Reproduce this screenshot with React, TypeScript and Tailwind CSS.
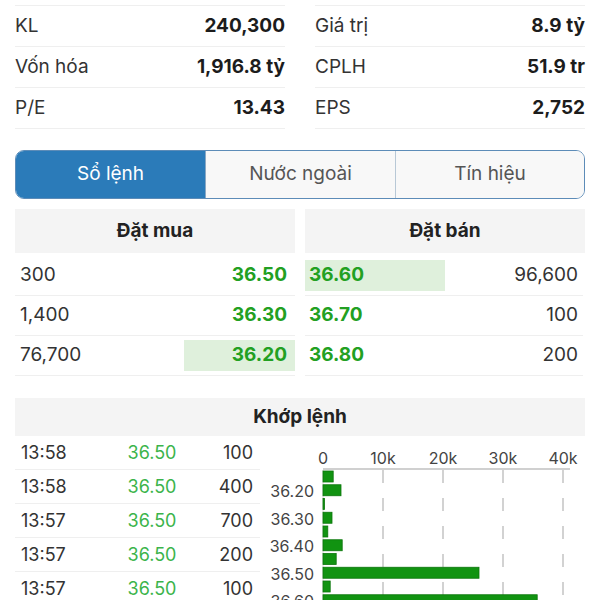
import React from "react";

const stats = [
  [
    ["KL", "240,300"],
    ["Vốn hóa", "1,916.8 tỷ"],
    ["P/E", "13.43"],
  ],
  [
    ["Giá trị", "8.9 tỷ"],
    ["CPLH", "51.9 tr"],
    ["EPS", "2,752"],
  ],
];

const buys = [
  { qty: "300", price: "36.50", bar: 0 },
  { qty: "1,400", price: "36.30", bar: 0 },
  { qty: "76,700", price: "36.20", bar: 111 },
];

const sells = [
  { qty: "96,600", price: "36.60", bar: 140 },
  { qty: "100", price: "36.70", bar: 0 },
  { qty: "200", price: "36.80", bar: 0 },
];

const trades = [
  ["13:58", "36.50", "100"],
  ["13:58", "36.50", "400"],
  ["13:57", "36.50", "700"],
  ["13:57", "36.50", "200"],
  ["13:57", "36.50", "100"],
];

// volume per 0.05 step, in thousands
const volumes = [1.7, 3, 0.25, 1.5, 0.8, 3.2, 2.2, 26, 1.2, 35.7];

function VolumeChart() {
  const x0 = 63;
  const perK = 6;
  const ticks = [0, 10, 20, 30, 40];
  const labels = ["36.20", "36.30", "36.40", "36.50", "36.60"];
  return (
    <svg width="325" height="165" viewBox="0 0 325 165" className="block">
      {ticks.map((t) => (
        <text
          key={t}
          x={x0 + t * perK}
          y="28"
          textAnchor="middle"
          fontSize="16"
          fill="#444"
          fontFamily="Inter, sans-serif"
        >
          {t === 0 ? "0" : `${t}k`}
        </text>
      ))}
      <line x1={x0} y1="33" x2="310" y2="33" stroke="#d0d0d0" strokeWidth="2" />
      {ticks.slice(1).map((t) => (
        <line
          key={t}
          x1={x0 + t * perK}
          y1="34"
          x2={x0 + t * perK}
          y2="165"
          stroke="#c4c4c4"
          strokeWidth="1.5"
          strokeDasharray="13 15"
        />
      ))}
      <line x1={x0} y1="34" x2={x0} y2="165" stroke="#d8d8d8" strokeWidth="1" />
      {volumes.map((v, i) => (
        <rect
          key={i}
          x={x0}
          y={35 + i * 13.75}
          width={Math.max(v * perK, 1.5)}
          height="11"
          fill="#119311"
          stroke="#0b760b"
          strokeWidth="0.8"
        />
      ))}
      {labels.map((l, i) => (
        <text
          key={l}
          x="54"
          y={61 + i * 27.5}
          textAnchor="end"
          fontSize="16"
          fill="#444"
          fontFamily="Inter, sans-serif"
        >
          {l}
        </text>
      ))}
    </svg>
  );
}

export default function App() {
  return (
    <div className="w-[600px] h-[600px] overflow-hidden bg-white font-['Inter','Liberation_Sans',sans-serif] text-[#222]">
      {/* stats */}
      <div className="grid grid-cols-2 gap-x-[30px] px-[15px] pt-[5px]">
        {stats.map((col, ci) => (
          <div key={ci} className="border-t border-[#efefef]">
            {col.map(([label, value]) => (
              <div
                key={label}
                className="h-[41px] flex items-center justify-between border-b border-[#efefef] text-[19px]"
              >
                <span className="text-[#333]">{label}</span>
                <span className="font-bold text-[#1c1c1c]">{value}</span>
              </div>
            ))}
          </div>
        ))}
      </div>

      {/* tabs */}
      <div className="mx-[15px] mt-[21px] h-[49px] flex rounded-[9px] border border-[#5d8cb8] overflow-hidden text-[19px]">
        <div className="w-[189px] flex items-center justify-center bg-[#2b7bb9] text-white">
          Sổ lệnh
        </div>
        <div className="w-[190px] flex items-center justify-center bg-[#f8f8f8] text-[#555] border-l border-[#8aa8c4]">
          Nước ngoài
        </div>
        <div className="flex-1 flex items-center justify-center bg-[#f8f8f8] text-[#555] border-l border-[#b8c8d6]">
          Tín hiệu
        </div>
      </div>

      {/* order book */}
      <div className="grid grid-cols-2 gap-x-[10px] px-[15px] mt-[10px]">
        <div>
          <div className="h-[44px] flex items-center justify-center bg-[#f4f4f4] font-bold text-[19px]">
            Đặt mua
          </div>
          <div className="mt-[3px]">
            {buys.map((r) => (
              <div
                key={r.price}
                className="h-[40px] flex items-center justify-between border-b border-[#efefef] text-[19px]"
              >
                <span className="pl-[5px] text-[#333]">{r.qty}</span>
                <span
                  className={
                    "h-[31px] flex items-center justify-end pr-[8px] font-bold text-[#22a022] " +
                    (r.bar ? "bg-[#dff0dc]" : "")
                  }
                  style={r.bar ? { width: r.bar } : undefined}
                >
                  {r.price}
                </span>
              </div>
            ))}
          </div>
        </div>
        <div>
          <div className="h-[44px] flex items-center justify-center bg-[#f4f4f4] font-bold text-[19px]">
            Đặt bán
          </div>
          <div className="mt-[3px]">
            {sells.map((r) => (
              <div
                key={r.price}
                className="h-[40px] flex items-center justify-between border-b border-[#efefef] mr-[2px] text-[19px]"
              >
                <span
                  className={
                    "h-[31px] flex items-center pl-[4px] font-bold text-[#22a022] " +
                    (r.bar ? "bg-[#dff0dc]" : "")
                  }
                  style={r.bar ? { width: r.bar } : undefined}
                >
                  {r.price}
                </span>
                <span className="pr-[5px] text-[#333]">{r.qty}</span>
              </div>
            ))}
          </div>
        </div>
      </div>

      {/* matched orders */}
      <div className="mx-[15px] mt-[22px] h-[38px] flex items-center justify-center bg-[#f4f4f4] font-bold text-[19px]">
        Khớp lệnh
      </div>
      <div className="flex pl-[15px]">
        <div className="w-[245px]">
          {trades.map(([t, p, v], i) => (
            <div
              key={i}
              className="h-[34px] flex items-center border-b border-[#efefef] text-[18px] text-[#333]"
            >
              <span className="w-[100px] pl-[6px]">{t}</span>
              <span className="w-[74px] text-center text-[#3cb44b]">{p}</span>
              <span className="flex-1 text-right pr-[7px]">{v}</span>
            </div>
          ))}
        </div>
        <VolumeChart />
      </div>
    </div>
  );
}
